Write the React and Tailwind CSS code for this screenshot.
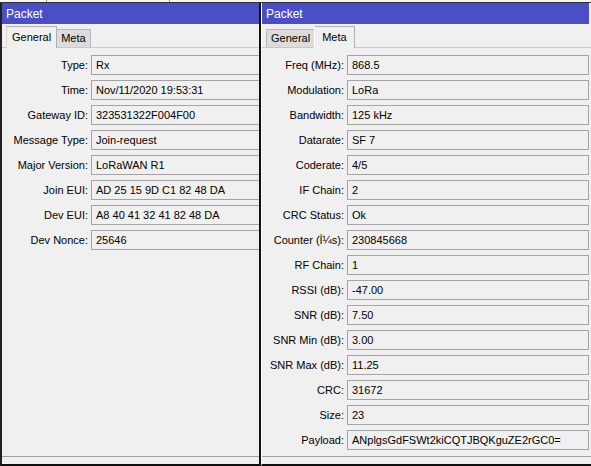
import React from "react";

const leftRows = [
  ["Type:", "Rx"],
  ["Time:", "Nov/11/2020 19:53:31"],
  ["Gateway ID:", "323531322F004F00"],
  ["Message Type:", "Join-request"],
  ["Major Version:", "LoRaWAN R1"],
  ["Join EUI:", "AD 25 15 9D C1 82 48 DA"],
  ["Dev EUI:", "A8 40 41 32 41 82 48 DA"],
  ["Dev Nonce:", "25646"],
];

const rightRows = [
  ["Freq (MHz):", "868.5"],
  ["Modulation:", "LoRa"],
  ["Bandwidth:", "125 kHz"],
  ["Datarate:", "SF 7"],
  ["Coderate:", "4/5"],
  ["IF Chain:", "2"],
  ["CRC Status:", "Ok"],
  ["Counter (Î¼s):", "230845668"],
  ["RF Chain:", "1"],
  ["RSSI (dB):", "-47.00"],
  ["SNR (dB):", "7.50"],
  ["SNR Min (dB):", "3.00"],
  ["SNR Max (dB):", "11.25"],
  ["CRC:", "31672"],
  ["Size:", "23"],
  ["Payload:", "ANplgsGdFSWt2kiCQTJBQKguZE2rGC0="],
];

function Tabs({ active }) {
  const general = active === "General";
  return (
    <div className="h-[23px] flex items-end pl-[4px] shrink-0">
      {general ? (
        <>
          <div className="h-[22px] px-[5px] flex items-center bg-[#f0f0f0] border-t border-l border-r border-[#b0b0b0] border-l-[#d8d8d8] relative -mb-px z-10">
            General
          </div>
          <div className="h-[18px] px-[4px] flex items-center bg-[#dcdcdc] border-t border-r border-[#b8b8b8]">
            Meta
          </div>
        </>
      ) : (
        <>
          <div className="h-[18px] px-[4px] flex items-center bg-[#dcdcdc] border-t border-l border-[#b8b8b8]">
            General
          </div>
          <div className="h-[22px] px-[7px] flex items-center bg-[#f0f0f0] border-t border-l border-r border-[#b0b0b0] border-l-[#ffffff] relative -mb-px z-10">
            Meta
          </div>
        </>
      )}
    </div>
  );
}

function Window({ className, active, rows, labelW, padR, titleCls }) {
  return (
    <div className={"flex flex-col h-full overflow-hidden bg-[#f0f0f0] border-b-2 border-[#101010] " + className}>
      <div className={"h-[21px] shrink-0 bg-[#4b4fc6] text-white flex items-center pl-[4px] text-[12px] " + titleCls}>
        Packet
      </div>
      <Tabs active={active} />
      <div className="h-[410px] shrink-0 border-t border-t-[#c8c8c8] border-b border-b-[#a0a0a0] pt-[7px] flex flex-col gap-[5px]">
        {rows.map(([l, v]) => (
          <div key={l} className={"flex items-center h-[20px] " + padR}>
            <div className={"shrink-0 text-right " + labelW}>{l}</div>
            <div className="ml-[3px] flex-1 h-[20px] border border-[#a4a4a4] bg-[#f0f0f0] flex items-center pl-[4px] whitespace-nowrap overflow-hidden">
              {v}
            </div>
          </div>
        ))}
      </div>
      <div className="flex-1" />
    </div>
  );
}

export default function App() {
  return (
    <div
      className="w-[591px] h-[466px] overflow-hidden bg-[#f0f0f0] flex flex-col text-[11px] text-black leading-none"
      style={{ fontFamily: '"Liberation Sans", Arial, sans-serif' }}
    >
      <div className="h-[3px] shrink-0 bg-[#f6f6f6] border-b border-[#303030] flex">
        <div className="w-[47px] border-r border-[#a0a0a0]" />
        <div className="w-[123px] border-r border-[#a0a0a0]" />
      </div>
      <div className="flex flex-1 min-h-0">
        <Window
          className="w-[261px] shrink-0 border-l-2 border-r-2 border-l-[#202020] border-r-[#101010]"
          active="General"
          rows={leftRows}
          labelW="w-[86px]"
          padR="mr-[-6px]"
          titleCls=""
        />
        <Window
          className="flex-1 border-l border-l-[#ffffff]"
          active="Meta"
          rows={rightRows}
          labelW="w-[82px]"
          padR="pr-[2px]"
          titleCls="mr-[2px]"
        />
      </div>
    </div>
  );
}
